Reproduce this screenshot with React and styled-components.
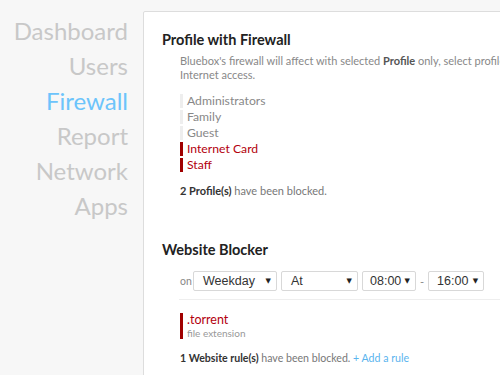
import React from "react";
import styled, { createGlobalStyle } from "styled-components";

const Global = createGlobalStyle`
  html, body { margin: 0; padding: 0; }
  body {
    background: #f7f7f7;
    font-family: Lato, "Open Sans", "DejaVu Sans", sans-serif;
    overflow: hidden;
    width: 500px;
    height: 375px;
  }
`;

const Page = styled.div`
  display: flex;
  align-items: flex-start;
  width: 500px;
  height: 375px;
  overflow: hidden;
`;

const Sidebar = styled.nav`
  flex: 0 0 128px;
  display: flex;
  flex-direction: column;
  align-items: flex-end;
  padding-top: 13px;
`;

const NavItem = styled.div`
  font-size: 24px;
  line-height: 35px;
  color: ${(p) => (p.$active ? "#6cc4fb" : "#c8c8c8")};
  white-space: nowrap;
`;

const Panel = styled.main`
  flex: 0 0 420px;
  margin-left: 15px;
  margin-top: 11px;
  background: #fff;
  border: 1px solid #dddddd;
  border-radius: 2px;
  padding: 18px 0 40px 18px;
  min-height: 400px;
`;

const Title = styled.h2`
  margin: 0;
  font-size: 14.5px;
  line-height: 20px;
  font-weight: 700;
  color: #222;
`;

const Section = styled.section`
  padding-left: 18px;
`;

const Desc = styled.p`
  margin: 4px 0 0;
  font-size: 11px;
  line-height: 14px;
  color: #888;
  white-space: nowrap;
  b { color: #555; }
`;

const List = styled.ul`
  list-style: none;
  margin: 12px 0 0;
  padding: 0;
`;

const Item = styled.li`
  border-left: 3px solid ${(p) => (p.$blocked ? "#a00000" : "#eeeeee")};
  padding-left: 4px;
  font-size: 12.2px;
  line-height: 14px;
  margin-bottom: 2px;
  color: ${(p) => (p.$blocked ? "#b3000e" : "#888")};
`;

const Summary = styled.p`
  margin: ${(p) => p.$top || "12px"} 0 0;
  font-size: ${(p) => p.$size || 11}px;
  line-height: 14px;
  color: #777;
  white-space: nowrap;
  b { color: #333; }
  a { color: #5ab4ee; text-decoration: none; }
`;

const Spacer = styled.div`
  height: ${(p) => p.$h}px;
`;

const Row = styled.div`
  display: flex;
  align-items: center;
  gap: 4px;
  margin-top: 11px;
`;

const On = styled.span`
  flex: 0 0 11px;
  width: 11px;
  min-width: 0;
  margin-right: -2px;
  white-space: nowrap;
  font-size: 10.5px;
  color: #888;
`;

const Select = styled.div`
  box-sizing: border-box;
  flex: 0 0 ${(p) => p.$w}px;
  height: 20px;
  border: 1px solid #d8d8d8;
  border-radius: 2px;
  background: #fff;
  display: flex;
  align-items: center;
  justify-content: space-between;
  padding: 0 5px 0 ${(p) => p.$pl || 9}px;
  font-family: "Liberation Sans", Arial, sans-serif;
  font-size: 12.5px;
  color: #333;
`;

const Arrow = styled.span`
  font-family: "DejaVu Sans", sans-serif;
  font-size: 7px;
  color: #222;
`;

const Dash = styled.span`
  font-size: 11px;
  color: #888;
`;

const Divider = styled.hr`
  border: 0;
  border-top: 1px solid #eeeeee;
  margin: 8px 0 0 -1px;
`;

const Rule = styled.div`
  margin-top: 13px;
  border-left: 3px solid #a00000;
  padding-left: 4px;
  display: flex;
  flex-direction: column;
`;

const RuleName = styled.span`
  font-size: 12.5px;
  line-height: 14px;
  color: #b3000e;
`;

const RuleType = styled.span`
  font-size: 10px;
  line-height: 12px;
  color: #999;
`;

const profiles = [
  { name: "Administrators", blocked: false },
  { name: "Family", blocked: false },
  { name: "Guest", blocked: false },
  { name: "Internet Card", blocked: true },
  { name: "Staff", blocked: true },
];

const nav = ["Dashboard", "Users", "Firewall", "Report", "Network", "Apps"];

function Sel({ w, pl, children }) {
  return (
    <Select $w={w} $pl={pl}>
      <span>{children}</span>
      <Arrow>▼</Arrow>
    </Select>
  );
}

export default function App() {
  return (
    <>
      <Global />
      <Page>
        <Sidebar>
          {nav.map((n) => (
            <NavItem key={n} $active={n === "Firewall"}>
              {n}
            </NavItem>
          ))}
        </Sidebar>
        <Panel>
          <Title>Profile with Firewall</Title>
          <Section>
            <Desc>
              Bluebox's firewall will affect with selected <b>Profile</b> only, select profile to block
              <br />
              Internet access.
            </Desc>
            <List>
              {profiles.map((p) => (
                <Item key={p.name} $blocked={p.blocked}>
                  {p.name}
                </Item>
              ))}
            </List>
            <Summary>
              <b>2 Profile(s)</b> have been blocked.
            </Summary>
          </Section>
          <Spacer $h={42} />
          <Title>Website Blocker</Title>
          <Section>
            <Row>
              <On>on</On>
              <Sel w={84} pl={9}>Weekday</Sel>
              <Sel w={77} pl={9}>At</Sel>
              <Sel w={54} pl={7}>08:00</Sel>
              <Dash>-</Dash>
              <Sel w={56} pl={8}>16:00</Sel>
            </Row>
            <Divider />
            <Rule>
              <RuleName>.torrent</RuleName>
              <RuleType>file extension</RuleType>
            </Rule>
            <Summary $top="12px" $size={10.6}>
              <b>1 Website rule(s)</b> have been blocked. <a href="#">+ Add a rule</a>
            </Summary>
          </Section>
        </Panel>
      </Page>
    </>
  );
}
